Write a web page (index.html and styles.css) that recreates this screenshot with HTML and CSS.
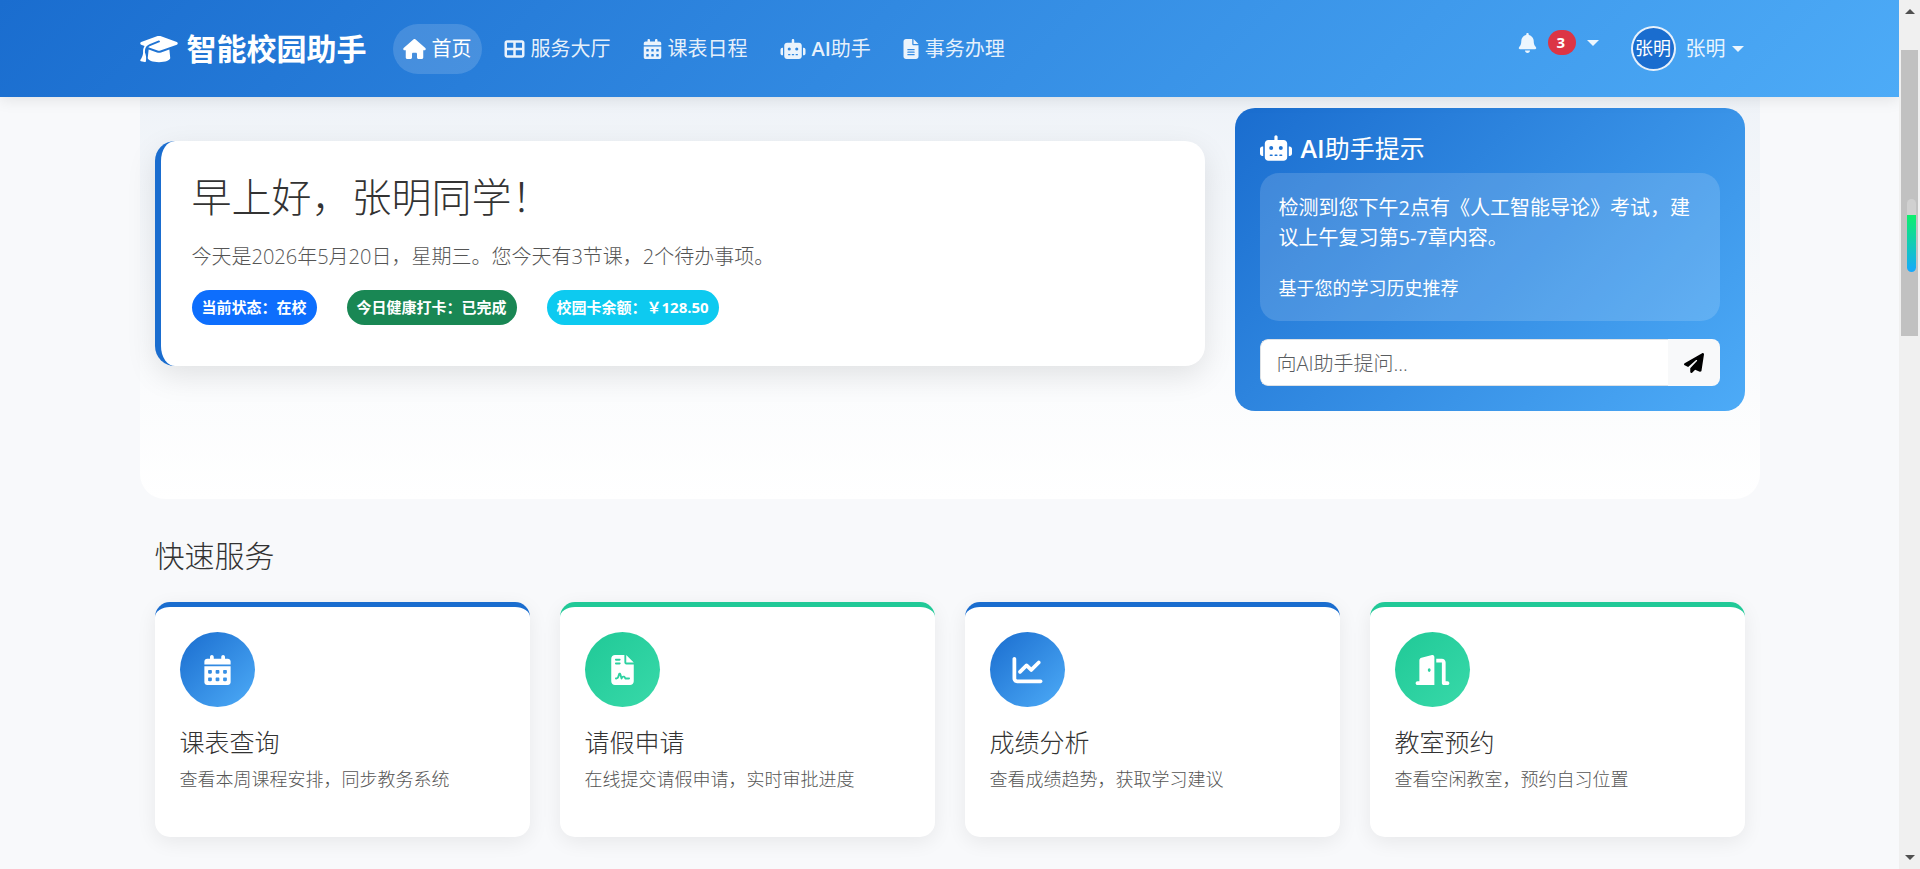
FILE: index.html
```html
<!DOCTYPE html>
<html lang="zh-CN">
<head>
    <meta charset="UTF-8">
    <meta name="viewport" content="width=device-width, initial-scale=1.0">
    <title>智能校园助手</title>
    <link rel="stylesheet" href="styles.css">
</head>
<body>
<svg class="icon-defs" aria-hidden="true">
    <symbol id="i-cap" viewBox="0 0 640 512"><path d="M320 32c-8.1 0-16.1 1.4-23.7 4.1L15.8 137.4C6.3 140.9 0 149.9 0 160s6.3 19.1 15.8 22.6l57.9 20.9C57.3 229.3 48 259.8 48 291.9v28.1c0 28.4-10.8 57.7-22.3 80.8c-6.5 13-13.9 25.8-22.5 37.6C0 442.7-.9 448.3 .9 453.4s6 8.9 11.2 10.2l64 16c4.2 1.1 8.7 .3 12.4-2s6.3-6.1 7.1-10.4c8.6-42.8 4.3-81.2-2.1-108.7C90.3 344.3 86 329.8 80 316.5V291.9c0-30.2 10.2-58.7 27.9-81.5c12.9-15.5 29.6-28 49.2-35.7l157-61.7c8.2-3.2 17.5 .8 20.7 9s-.8 17.5-9 20.7l-157 61.7c-12.4 4.9-23.3 12.4-32.2 21.6l159.6 57.6c7.6 2.7 15.6 4.1 23.7 4.1s16.1-1.4 23.7-4.1L624.2 182.6c9.5-3.4 15.8-12.5 15.8-22.6s-6.3-19.1-15.8-22.6L343.7 36.1C336.1 33.4 328.1 32 320 32zM128 408c0 35.3 86 72 192 72s192-36.7 192-72L496.7 262.6 354.5 314c-11.1 4-22.8 6-34.5 6s-23.5-2-34.5-6L143.3 262.6 128 408z"/></symbol>
    <symbol id="i-home" viewBox="0 0 576 512"><path d="M575.8 255.5c0 18-15 32.1-32 32.1h-32l.7 160.2c0 2.7-.2 5.4-.5 8.1V472c0 22.1-17.9 40-40 40H456c-1.1 0-2.2 0-3.3-.1c-1.4 .1-2.8 .1-4.2 .1H416 392c-22.1 0-40-17.9-40-40V448 384c0-17.7-14.3-32-32-32H256c-17.7 0-32 14.3-32 32v64 24c0 22.1-17.9 40-40 40H160 128.1c-1.5 0-3-.1-4.5-.2c-1.2 .1-2.4 .2-3.6 .2H104c-22.1 0-40-17.9-40-40V360c0-.9 0-1.9 .1-2.8V287.6H32c-18 0-32-14-32-32.1c0-9 3-17 10-24L266.4 8c7-7 15-8 22-8s15 2 21 7L564.8 231.5c8 7 12 15 11 24z"/></symbol>
    <symbol id="i-grid" viewBox="0 0 512 512"><path d="M448 96V224H288V96H448zm0 192V416H288V288H448zM224 224H64V96H224V224zM64 288H224V416H64V288zM64 32C28.7 32 0 60.7 0 96V416c0 35.3 28.7 64 64 64H448c35.3 0 64-28.7 64-64V96c0-35.3-28.7-64-64-64H64z"/></symbol>
    <symbol id="i-calendar" viewBox="0 0 448 512"><path d="M128 0c17.7 0 32 14.3 32 32V64H288V32c0-17.7 14.3-32 32-32s32 14.3 32 32V64h48c26.5 0 48 21.5 48 48v48H0V112C0 85.5 21.5 64 48 64H96V32c0-17.7 14.3-32 32-32zM0 192H448V464c0 26.5-21.5 48-48 48H48c-26.5 0-48-21.5-48-48V192zm64 80v32c0 8.8 7.2 16 16 16h32c8.8 0 16-7.2 16-16V272c0-8.8-7.2-16-16-16H80c-8.8 0-16 7.2-16 16zm128 0v32c0 8.8 7.2 16 16 16h32c8.8 0 16-7.2 16-16V272c0-8.8-7.2-16-16-16H208c-8.8 0-16 7.2-16 16zm144-16c-8.8 0-16 7.2-16 16v32c0 8.8 7.2 16 16 16h32c8.8 0 16-7.2 16-16V272c0-8.8-7.2-16-16-16H336zM64 400v32c0 8.8 7.2 16 16 16h32c8.8 0 16-7.2 16-16V400c0-8.8-7.2-16-16-16H80c-8.8 0-16 7.2-16 16zm144-16c-8.8 0-16 7.2-16 16v32c0 8.8 7.2 16 16 16h32c8.8 0 16-7.2 16-16V400c0-8.8-7.2-16-16-16H208zm112 16v32c0 8.8 7.2 16 16 16h32c8.8 0 16-7.2 16-16V400c0-8.8-7.2-16-16-16H336c-8.8 0-16 7.2-16 16z"/></symbol>
    <symbol id="i-robot" viewBox="0 0 640 512"><path d="M320 0c17.7 0 32 14.3 32 32V96H472c39.8 0 72 32.2 72 72V440c0 39.8-32.2 72-72 72H168c-39.8 0-72-32.2-72-72V168c0-39.8 32.2-72 72-72H288V32c0-17.7 14.3-32 32-32zM208 384c-8.8 0-16 7.2-16 16s7.2 16 16 16h32c8.8 0 16-7.2 16-16s-7.2-16-16-16H208zm96 0c-8.8 0-16 7.2-16 16s7.2 16 16 16h32c8.8 0 16-7.2 16-16s-7.2-16-16-16H304zm96 0c-8.8 0-16 7.2-16 16s7.2 16 16 16h32c8.8 0 16-7.2 16-16s-7.2-16-16-16H400zM264 256a40 40 0 1 0 -80 0 40 40 0 1 0 80 0zm152 40a40 40 0 1 0 0-80 40 40 0 1 0 0 80zM48 224H64V416H48c-26.5 0-48-21.5-48-48V272c0-26.5 21.5-48 48-48zm544 0c26.5 0 48 21.5 48 48v96c0 26.5-21.5 48-48 48H576V224h16z"/></symbol>
    <symbol id="i-file" viewBox="0 0 384 512"><path d="M64 0C28.7 0 0 28.7 0 64V448c0 35.3 28.7 64 64 64H320c35.3 0 64-28.7 64-64V160H256c-17.7 0-32-14.3-32-32V0H64zM256 0V128H384L256 0zM112 256H272c8.8 0 16 7.2 16 16s-7.2 16-16 16H112c-8.8 0-16-7.2-16-16s7.2-16 16-16zm0 64H272c8.8 0 16 7.2 16 16s-7.2 16-16 16H112c-8.8 0-16-7.2-16-16s7.2-16 16-16zm0 64H272c8.8 0 16 7.2 16 16s-7.2 16-16 16H112c-8.8 0-16-7.2-16-16s7.2-16 16-16z"/></symbol>
    <symbol id="i-bell" viewBox="0 0 448 512"><path d="M224 0c-17.7 0-32 14.3-32 32V51.2C119 66 64 130.6 64 208v18.8c0 47-17.3 92.4-48.5 127.6l-7.4 8.3c-8.4 9.4-10.4 22.9-5.3 34.4S19.4 416 32 416H416c12.6 0 24-7.4 29.2-18.9s3.1-25-5.3-34.4l-7.4-8.3C401.3 319.2 384 273.9 384 226.8V208c0-77.4-55-142-128-156.8V32c0-17.7-14.3-32-32-32zm45.3 493.3c12-12 18.7-28.3 18.7-45.3H224 160c0 17 6.7 33.3 18.7 45.3s28.3 18.7 45.3 18.7s33.3-6.7 45.3-18.7z"/></symbol>
    <symbol id="i-send" viewBox="0 0 512 512"><path d="M498.1 5.6c10.1 7 15.4 19.1 13.5 31.2l-64 416c-1.5 9.7-7.4 18.2-16 23s-18.9 5.4-28 1.6L284 427.7l-68.5 74.1c-8.9 9.7-22.9 12.9-35.2 8.1S160 493.2 160 480V396.4c0-4 1.5-7.8 4.2-10.7L331.8 202.8c5.8-6.3 5.6-16-.4-22s-15.7-6.4-22-.7L106 360.8 17.7 316.6C7.1 311.3 .3 300.7 0 288.9s5.9-22.8 16.1-28.7l448-256c10.7-6.1 23.9-5.5 34 1.4z"/></symbol>
    <symbol id="i-contract" viewBox="0 0 384 512"><path d="M64 0C28.7 0 0 28.7 0 64V448c0 35.3 28.7 64 64 64H320c35.3 0 64-28.7 64-64V160H256c-17.7 0-32-14.3-32-32V0H64zM256 0V128H384L256 0zM80 64h64c8.8 0 16 7.2 16 16s-7.2 16-16 16H80c-8.8 0-16-7.2-16-16s7.2-16 16-16zm0 64h64c8.8 0 16 7.2 16 16s-7.2 16-16 16H80c-8.8 0-16-7.2-16-16s7.2-16 16-16zm54.2 253.8c-6.1 20.3-24.8 34.2-46 34.2H80c-8.8 0-16-7.2-16-16s7.2-16 16-16h8.2c7.1 0 13.3-4.6 15.3-11.4l14.9-49.5c3.4-11.3 13.8-19.1 25.6-19.1s22.2 7.7 25.6 19.1l11.6 38.6c7.4-6.2 16.8-9.7 26.8-9.7c15.9 0 30.4 9 37.5 23.2l4.4 8.8H304c8.8 0 16 7.2 16 16s-7.2 16-16 16H240c-6.1 0-11.6-3.4-14.3-8.8l-8.8-17.7c-1.7-3.4-5.1-5.5-8.8-5.5s-7.2 2.1-8.8 5.5l-8.8 17.7c-2.9 5.9-9.2 9.4-15.7 8.8s-12.1-5.1-13.9-11.3L144 349l-9.8 32.8z"/></symbol>
    <symbol id="i-chart" viewBox="0 0 512 512"><path d="M64 64c0-17.7-14.3-32-32-32S0 46.3 0 64V400c0 44.2 35.8 80 80 80H480c17.7 0 32-14.3 32-32s-14.3-32-32-32H80c-8.8 0-16-7.2-16-16V64zm406.6 86.6c12.5-12.5 12.5-32.8 0-45.3s-32.8-12.5-45.3 0L320 210.7l-57.4-57.4c-12.5-12.5-32.8-12.5-45.3 0l-112 112c-12.5 12.5-12.5 32.8 0 45.3s32.8 12.5 45.3 0L240 221.3l57.4 57.4c12.5 12.5 32.8 12.5 45.3 0l128-128z"/></symbol>
    <symbol id="i-door" viewBox="0 0 576 512"><path d="M320 32c0-9.9-4.5-19.2-12.3-25.2S289.8-1.4 280.2 1l-179.9 45C79 51.3 64 70.5 64 92.5V448H32c-17.7 0-32 14.3-32 32s14.3 32 32 32H96 288h32V480 32zM256 256c0 17.7-10.7 32-24 32s-24-14.3-24-32s10.7-32 24-32s24 14.3 24 32zm96-128h96V480c0 17.7 14.3 32 32 32h64c17.7 0 32-14.3 32-32s-14.3-32-32-32H512V128c0-35.3-28.7-64-64-64H352v64z"/></symbol>
</svg>

<div class="window">
    <div class="page">
        <header class="navbar">
            <div class="container navbar-inner">
                <a class="brand" href="#">
                    <svg class="icon"><use href="#i-cap"/></svg>
                    <span>智能校园助手</span>
                </a>
                <nav class="nav">
                    <a class="nav-link active" href="#"><svg class="icon icon-home"><use href="#i-home"/></svg>首页</a>
                    <a class="nav-link" href="#"><svg class="icon icon-grid"><use href="#i-grid"/></svg>服务大厅</a>
                    <a class="nav-link" href="#"><svg class="icon icon-calendar"><use href="#i-calendar"/></svg>课表日程</a>
                    <a class="nav-link" href="#"><svg class="icon icon-robot"><use href="#i-robot"/></svg><span><span class="latin">AI</span>助手</span></a>
                    <a class="nav-link" href="#"><svg class="icon icon-file"><use href="#i-file"/></svg>事务办理</a>
                </nav>
                <div class="nav nav-user">
                    <a class="nav-link nav-bell" href="#" aria-label="通知">
                        <svg class="icon icon-bell"><use href="#i-bell"/></svg>
                        <span class="count">3</span>
                        <span class="caret"></span>
                    </a>
                    <a class="nav-link nav-profile" href="#">
                        <span class="avatar">张明</span>
                        <span>张明</span>
                        <span class="caret"></span>
                    </a>
                </div>
            </div>
        </header>

        <main class="container">
            <section class="hero">
                <div class="welcome">
                    <h1>早上好，张明同学！</h1>
                    <p>今天是2026年5月20日，星期三。您今天有3节课，2个待办事项。</p>
                    <div class="badges">
                        <span class="badge badge-primary">当前状态：在校</span>
                        <span class="badge badge-success">今日健康打卡：已完成</span>
                        <span class="badge badge-info">校园卡余额：￥128.50</span>
                    </div>
                </div>

                <div class="assistant">
                    <h2><svg class="icon"><use href="#i-robot"/></svg><span><span class="latin">AI</span>助手提示</span></h2>
                    <div class="message">
                        <p>检测到您下午2点有《人工智能导论》考试，建议上午复习第5-7章内容。</p>
                        <small>基于您的学习历史推荐</small>
                    </div>
                    <form class="ask">
                        <input type="text" placeholder="向AI助手提问..." aria-label="向AI助手提问">
                        <button type="button" aria-label="发送"><svg class="icon"><use href="#i-send"/></svg></button>
                    </form>
                </div>
            </section>

            <section class="services">
                <h2>快速服务</h2>
                <div class="service-grid">
                    <article class="service">
                        <div class="service-icon"><svg class="icon"><use href="#i-calendar"/></svg></div>
                        <h3>课表查询</h3>
                        <p>查看本周课程安排，同步教务系统</p>
                    </article>
                    <article class="service green">
                        <div class="service-icon"><svg class="icon"><use href="#i-contract"/></svg></div>
                        <h3>请假申请</h3>
                        <p>在线提交请假申请，实时审批进度</p>
                    </article>
                    <article class="service">
                        <div class="service-icon"><svg class="icon"><use href="#i-chart"/></svg></div>
                        <h3>成绩分析</h3>
                        <p>查看成绩趋势，获取学习建议</p>
                    </article>
                    <article class="service green">
                        <div class="service-icon"><svg class="icon"><use href="#i-door"/></svg></div>
                        <h3>教室预约</h3>
                        <p>查看空闲教室，预约自习位置</p>
                    </article>
                </div>
            </section>
        </main>
    </div>

    <div class="scrollbar" aria-hidden="true">
        <span class="arrow arrow-up"></span>
        <div class="track">
            <div class="thumb"><div class="meter"></div></div>
        </div>
        <span class="arrow arrow-down"></span>
    </div>
</div>
</body>
</html>
```
FILE: styles.css
```css
:root {
    --blue: #1a6dcf;
    --blue-light: #4dabf7;
    --green: #20c997;
    --green-light: #38d9a9;
}

* {
    box-sizing: border-box;
}

body {
    margin: 0;
    font-family: "Open Sans", "Noto Sans CJK SC", sans-serif;
    font-size: 20px;
    font-weight: 300;
    line-height: 30px;
    color: #333;
    background-color: #f8f9fb;
}

h1, h2, h3, p {
    margin: 0;
    font-weight: 300;
}

a {
    color: inherit;
    text-decoration: none;
}

.icon-defs {
    position: absolute;
    width: 0;
    height: 0;
}

.icon {
    flex: none;
    height: 20px;
    fill: currentColor;
}

.latin {
    font-weight: 600;
}

.window {
    display: flex;
    height: 100vh;
    overflow: hidden;
}

.page {
    flex: 1;
    min-width: 0;
    overflow: hidden;
}

.container {
    max-width: 1650px;
    margin: 0 auto;
    padding: 0 15px;
}

/* navbar */
.navbar {
    position: relative;
    z-index: 10;
    color: #fff;
    background: linear-gradient(135deg, var(--blue), var(--blue-light));
    box-shadow: 0 2px 15px rgba(0, 0, 0, 0.1);
}

.navbar-inner {
    display: flex;
    align-items: center;
    min-height: 97px;
}

.brand {
    display: flex;
    align-items: center;
    gap: 9px;
    margin-right: 20px;
    font-size: 30px;
    font-weight: 700;
    line-height: 45px;
}

.brand .icon {
    width: 38px;
    height: 30px;
}

.nav {
    display: flex;
}

.nav-link {
    display: flex;
    align-items: center;
    gap: 6px;
    margin: 0 6px;
    padding: 10px;
    border-radius: 25px;
    color: rgba(255, 255, 255, 0.9);
    font-weight: 400;
}

.nav-link.active {
    color: #fff;
    background-color: rgba(255, 255, 255, 0.15);
}

.icon-home {
    width: 23px;
}

.icon-grid {
    width: 21px;
}

.icon-calendar,
.icon-bell {
    width: 19px;
}

.icon-robot {
    width: 26px;
}

.icon-file {
    width: 16px;
}

.nav-user {
    align-items: flex-start;
    margin-left: auto;
}

.nav-bell {
    gap: 11px;
    line-height: 34px;
}

.count {
    min-width: 28px;
    padding: 5px 9px;
    border-radius: 13px;
    font-size: 15px;
    font-weight: 700;
    line-height: 15px;
    color: #fff;
    background-color: #dc3545;
}

.nav-bell .icon,
.nav-bell .count,
.nav-bell .caret {
    margin-top: 4px;
}

.avatar {
    width: 45px;
    height: 45px;
    margin-right: 4px;
    border: 2px solid rgba(255, 255, 255, 0.9);
    border-radius: 50%;
    font-size: 18px;
    line-height: 41px;
    text-align: center;
    white-space: nowrap;
    color: #fff;
    background-color: var(--blue);
}

.caret {
    border-top: 6px solid;
    border-right: 6px solid transparent;
    border-left: 6px solid transparent;
}

/* hero */
.hero {
    display: grid;
    grid-template-columns: repeat(12, 1fr);
    gap: 30px;
    align-items: start;
    padding: 11px 15px 88px;
    border-radius: 0 0 25px 25px;
    background: linear-gradient(to bottom, #eff3f8, #fff);
}

.welcome {
    grid-column: span 8;
    margin-top: 33px;
    padding: 31px 31px 41px;
    border-left: 6px solid var(--blue);
    border-radius: 20px;
    background-color: #fff;
    box-shadow: 0 10px 30px rgba(0, 0, 0, 0.1);
}

.welcome h1 {
    margin-bottom: 20px;
    font-size: 40px;
    line-height: 50px;
}

.welcome p {
    margin-bottom: 18px;
    color: #555;
}

.badges {
    display: flex;
    flex-wrap: wrap;
    gap: 30px;
}

.badge {
    padding: 10px;
    border-radius: 18px;
    font-size: 15px;
    font-weight: 700;
    line-height: 15px;
    color: #fff;
}

.badge-primary {
    background-color: #0d6efd;
}

.badge-success {
    background-color: #198754;
}

.badge-info {
    background-color: #0dcaf0;
}

/* AI assistant */
.assistant {
    grid-column: span 4;
    padding: 25px;
    border-radius: 20px;
    color: #fff;
    background: linear-gradient(135deg, var(--blue), var(--blue-light));
}

.assistant h2 {
    display: flex;
    align-items: center;
    gap: 9px;
    margin-bottom: 10px;
    font-size: 25px;
    font-weight: 400;
    line-height: 30px;
}

.assistant h2 .icon {
    width: 32px;
    height: 26px;
}

.message {
    margin-bottom: 18px;
    padding: 20px 19px 18px;
    border-radius: 19px;
    font-weight: 400;
    background-color: rgba(255, 255, 255, 0.15);
}

.message p {
    margin-bottom: 20px;
    font-weight: 400;
}

.message small {
    display: block;
    font-size: 18px;
}

.ask {
    display: flex;
    height: 47px;
    border-radius: 8px;
    overflow: hidden;
}

.ask input {
    flex: 1;
    min-width: 0;
    padding: 2px 16px 0;
    border: 1px solid #dee2e6;
    border-right: 0;
    border-radius: 8px 0 0 8px;
    font: inherit;
    background-color: #fff;
    outline: none;
}

.ask input::placeholder {
    color: #595c5f;
}

.ask button {
    display: flex;
    align-items: center;
    justify-content: center;
    width: 52px;
    padding: 0;
    border: 0;
    color: #000;
    background-color: #f8f9fa;
    cursor: pointer;
}

.ask .icon {
    width: 20px;
}

/* services */
.services {
    padding: 38px 15px;
}

.services h2 {
    margin-bottom: 28px;
    font-size: 30px;
    line-height: 37px;
}

.service-grid {
    display: grid;
    grid-template-columns: repeat(4, 1fr);
    gap: 30px;
}

.service {
    padding: 25px 25px 44px;
    border-top: 5px solid var(--blue);
    border-radius: 15px;
    background-color: #fff;
    box-shadow: 0 5px 20px rgba(0, 0, 0, 0.07);
}

.service-icon {
    display: flex;
    align-items: center;
    justify-content: center;
    width: 75px;
    height: 75px;
    margin-bottom: 20px;
    border-radius: 50%;
    color: #fff;
    background: linear-gradient(135deg, var(--blue), var(--blue-light));
}

.service-icon .icon {
    width: 35px;
    height: 30px;
}

.service.green {
    border-top-color: var(--green);
}

.green .service-icon {
    background: linear-gradient(135deg, var(--green), var(--green-light));
}

.service h3 {
    margin-bottom: 9px;
    font-size: 25px;
    line-height: 30px;
}

.service p {
    font-size: 18px;
    line-height: 27px;
    color: #555;
}

/* window scrollbar */
.scrollbar {
    display: flex;
    flex-direction: column;
    align-items: center;
    width: 21px;
    padding: 9px 0;
    background-color: #f0f0f0;
}

.track {
    flex: 1;
    width: 17px;
    padding-top: 36px;
}

.thumb {
    height: 286px;
    padding: 149px 2px 0 6px;
    background-color: #c1c1c1;
}

.meter {
    height: 73px;
    border-radius: 5px;
    background: linear-gradient(to bottom, #d0d0d0 16px, #0cef6c 16px, #17a9fd);
}

.arrow {
    border-right: 5px solid transparent;
    border-left: 5px solid transparent;
}

.arrow-up {
    border-bottom: 5px solid #505050;
}

.arrow-down {
    border-top: 5px solid #505050;
}
```
